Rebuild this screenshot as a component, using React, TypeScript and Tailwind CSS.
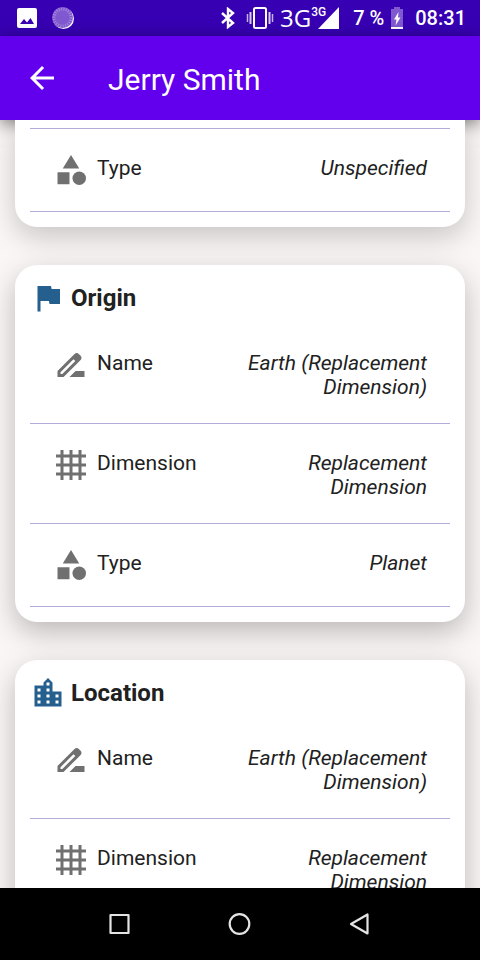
import type { ComponentType, ReactNode } from "react";
import {
  MdArrowBack,
  MdCategory,
  MdDriveFileRenameOutline,
  MdFlag,
  MdGrid4X4,
  MdLocationCity,
} from "react-icons/md";

type IconType = ComponentType<{ className?: string }>;

const rowIcons: Record<string, IconType> = {
  Name: MdDriveFileRenameOutline,
  Dimension: MdGrid4X4,
  Type: MdCategory,
};

function StatusBar() {
  return (
    <div className="flex h-9 shrink-0 items-center bg-[#3700b3] pl-[17px] pr-[14px] text-white">
      <svg className="size-5" viewBox="0 0 20 20" aria-hidden="true">
        <rect width="20" height="20" rx="2" fill="#fff" />
        <path d="M3 16l4-5 3 3.500 3.500-4.500L17 16z" fill="#3700b3" />
      </svg>
      <svg className="ml-[15px] size-[22px]" viewBox="0 0 22 22" aria-hidden="true">
        <circle cx="11.500" cy="11.500" r="10.500" fill="#fff" />
        <circle cx="10.500" cy="10.500" r="10.500" fill="#8058d0" />
        <circle cx="10.500" cy="10.500" r="8.500" fill="none" stroke="#a78bdf" strokeWidth="3" strokeDasharray="1 1.400" />
      </svg>
      <div className="ml-auto flex items-center">
        <svg className="h-[22px] w-[14px]" viewBox="0 0 14 22" fill="none" stroke="#fff" strokeWidth="2.400" aria-hidden="true">
          <path d="M1 6l11 10-5 4V2l5 4L1 16" />
        </svg>
        <svg className="ml-[11px] h-[22px] w-[28px]" viewBox="0 0 28 22" fill="none" stroke="#fff" aria-hidden="true">
          <rect x="8" y="1" width="12" height="20" rx="1.500" strokeWidth="2" />
          <path d="M4.500 5v12M23.500 5v12" strokeWidth="2" opacity="0.800" />
          <path d="M1.500 7v8M26.500 7v8" strokeWidth="1.500" opacity="0.700" />
        </svg>
        <span className="ml-[6px] font-['Open_Sans',sans-serif] text-[24px] leading-9">3G</span>
        <div className="relative h-[22px] w-[28px]">
          <svg className="size-full" viewBox="0 0 28 22" aria-hidden="true">
            <path d="M28 0v22H7z" fill="#fff" />
          </svg>
          <span className="absolute -top-px left-0 text-[12px] leading-3 font-medium">3G</span>
        </div>
        <span className="ml-[14px] text-[20px] leading-9 font-medium">7 %</span>
        <svg className="ml-[7px] h-[22px] w-3" viewBox="0 0 12 22" aria-hidden="true">
          <path d="M3 0h6v2h3v20H0V2h3z" fill="#8058d0" />
          <path d="M0 20h12v2H0z" fill="#fff" />
          <path d="M7.500 5L3 12.500h2.500L4.500 18.500 9.500 10.500H7z" fill="#fff" />
        </svg>
        <span className="ml-3 text-[20px] leading-9 font-medium">08:31</span>
      </div>
    </div>
  );
}

function AppBar() {
  return (
    <header className="flex h-[84px] shrink-0 items-center bg-[#6200ee] pt-1 pl-6 text-white shadow-[0_4px_16px_rgba(0,0,0,0.5)]">
      <button type="button" aria-label="Back" className="-mt-1">
        <MdArrowBack className="size-9" />
      </button>
      <h1 className="ml-12 text-[30px] leading-9">Jerry Smith</h1>
    </header>
  );
}

function Row({ label, value }: { label: string; value: string }) {
  const Icon = rowIcons[label];
  return (
    <div className="flex items-start border-b border-[#b3acd8] px-[23px] pt-[23px] pb-6">
      <Icon className="-mb-px size-9 shrink-0 text-[#707070]" />
      <dt className="ml-2 pt-1">{label}</dt>
      <dd className="ml-auto w-[200px] pt-1 text-right italic">{value}</dd>
    </div>
  );
}

function Card({ title, icon: Icon, children }: { title: string; icon: IconType; children: ReactNode }) {
  return (
    <section className="rounded-[22px] bg-white p-[15px] shadow-[0_10px_28px_rgba(0,0,0,0.25)]">
      <h2 className="mb-2 flex items-center gap-[5px] text-[24px] leading-9 font-bold">
        <Icon className="size-9 text-[#245f8e]" />
        {title}
      </h2>
      <dl>{children}</dl>
    </section>
  );
}

function NavBar() {
  return (
    <nav className="flex h-[72px] shrink-0 items-center justify-center gap-[84px] bg-black text-[#e4e4e4]">
      <button type="button" aria-label="Recent apps">
        <svg className="size-9" viewBox="0 0 36 36" fill="none" stroke="currentColor" strokeWidth="2.200" strokeLinejoin="round">
          <rect x="8.500" y="9" width="18" height="18" />
        </svg>
      </button>
      <button type="button" aria-label="Home">
        <svg className="size-9" viewBox="0 0 36 36" fill="none" stroke="currentColor" strokeWidth="2.200">
          <circle cx="17.500" cy="18" r="9.800" />
        </svg>
      </button>
      <button type="button" aria-label="Back to previous screen">
        <svg className="size-9" viewBox="0 0 36 36" fill="none" stroke="currentColor" strokeWidth="2.200" strokeLinejoin="round">
          <path d="M25.500 8.500v19L9 18z" />
        </svg>
      </button>
    </nav>
  );
}

export default function App() {
  return (
    <div className="flex h-screen flex-col bg-[#faf6f5] font-[Roboto,sans-serif] text-[#212121]">
      <StatusBar />
      <AppBar />
      <main className="relative flex flex-1 flex-col gap-[38px] overflow-y-auto px-[15px] pb-[38px] text-[21px] leading-6 [scrollbar-width:none]">
        <section className="rounded-b-[22px] bg-white px-[15px] pt-2 pb-[15px] shadow-[0_10px_28px_rgba(0,0,0,0.2)]">
          <dl className="border-t border-[#b3acd8]">
            <Row label="Type" value="Unspecified" />
          </dl>
        </section>
        <Card title="Origin" icon={MdFlag}>
          <Row label="Name" value="Earth (Replacement Dimension)" />
          <Row label="Dimension" value="Replacement Dimension" />
          <Row label="Type" value="Planet" />
        </Card>
        <Card title="Location" icon={MdLocationCity}>
          <Row label="Name" value="Earth (Replacement Dimension)" />
          <Row label="Dimension" value="Replacement Dimension" />
        </Card>
      </main>
      <NavBar />
    </div>
  );
}
